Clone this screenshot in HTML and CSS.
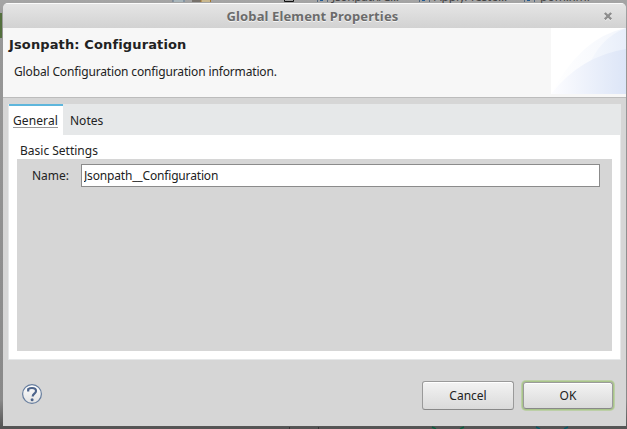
FILE: index.html
```html
<!DOCTYPE html>
<html lang="en">
<head>
<meta charset="utf-8">
<title>Global Element Properties</title>
<link rel="stylesheet" href="styles.css">
</head>
<body>
<div class="desktop">
  <div class="behind">
    <span class="tile"></span>
    <span class="btab bt1">Jsonpath/C...</span>
    <span class="btab bt2">Apply/Teste...</span>
    <span class="btab bt3">pom.xml</span>
    <svg class="marks" width="627" height="429" viewBox="0 0 627 429" aria-hidden="true">
      <path d="M173 0h12v2h-12z" fill="#a9b6bb"/>
      <path d="M173 0v2M184 0v2" stroke="#63758b"/>
      <path d="M192 0h9v2h-9z" fill="#77726c"/>
      <path d="M201 0h10v2h-10z" fill="#c9b88f"/>
      <path d="M201 0v2M210.500 0v2" stroke="#a5772e"/>
      <path d="M284.500 0v1.500h9v-1.500" fill="none" stroke="#111"/>
      <path d="M317.500 0v2M327.500 0v2M419.500 0v2M429.500 0v2M524.500 0v2M534.500 0v2" stroke="#53677f"/>
      <path d="M320 0h3v1h-3zM422 0h3v1h-3zM527 0h3v1h-3z" fill="#215a93"/>
      <path d="M432 427l4 2M464 427l-4 2" stroke="#0c5e3f" stroke-width="1.500"/>
      <path d="M536 427l4 2M568 427l-4 2" stroke="#0b5966" stroke-width="1.500"/>
      <path d="M289.500 427v2M318.500 427v2" stroke="#353535"/>
    </svg>
  </div>
  <main class="dialog">
    <div class="titlebar">
      <span class="title">Global Element Properties</span>
      <svg class="close" width="10" height="10" viewBox="0 0 10 10" aria-label="Close">
        <path d="M2 3l6 6M8 3l-6 6" stroke="#fff" stroke-width="2.400"/>
        <path d="M1.800 2l6.400 6.400M8.200 2l-6.400 6.400" stroke="#8d8d8d" stroke-width="2.400"/>
      </svg>
    </div>
    <header class="header">
      <div class="intro">
        <h1>Jsonpath: Configuration</h1>
        <p>Global Configuration configuration information.</p>
      </div>
      <svg class="banner" width="75" height="66" viewBox="0 0 75 66" aria-hidden="true">
        <defs>
          <linearGradient id="a"><stop offset="0" stop-color="#fff"/><stop offset="1" stop-color="#f3f6fc"/></linearGradient>
          <linearGradient id="b"><stop offset="0" stop-color="#f5f8fd"/><stop offset="1" stop-color="#e8eefa"/></linearGradient>
          <linearGradient id="c"><stop offset="0" stop-color="#fdfdff"/><stop offset="1" stop-color="#dce5f7"/></linearGradient>
        </defs>
        <path fill="#fff" d="M0 0h75v66H0z"/>
        <path fill="url(#a)" d="M0 66Q30 9 75 0v66z"/>
        <path fill="url(#b)" d="M36 66V42Q48 10 75 0v66z"/>
        <path fill="url(#c)" d="M0 66Q30 28 75 21v45z"/>
      </svg>
    </header>
    <section class="folder">
      <nav class="tabs">
        <span class="tab active"><span class="tablabel">General</span></span>
        <span class="tab">Notes</span>
      </nav>
      <div class="page">
        <div class="legend">Basic Settings</div>
        <div class="group">
          <label for="name">Name:</label>
          <input id="name" type="text" value="Jsonpath__Configuration">
        </div>
      </div>
    </section>
    <footer class="footer">
      <svg class="help" width="22" height="22" viewBox="0 0 22 22" aria-label="Help">
        <defs><linearGradient id="h" x2="0" y2="1"><stop stop-color="#fff"/><stop offset="1" stop-color="#e2e2e2"/></linearGradient></defs>
        <circle cx="11" cy="11" r="9.400" fill="url(#h)" stroke="#667d9e" stroke-width="1.200"/>
        <path d="M7.200 8.500V6.200Q8.700 5 11 5c2.500 0 4 1.100 4 3 0 2.700-3.300 2.700-3.300 5.400" fill="none" stroke="#4d648b" stroke-width="2.200"/>
        <circle cx="11.100" cy="16.700" r="1.500" fill="#4d648b"/>
      </svg>
      <div class="buttons">
        <button class="btn">Cancel</button>
        <button class="btn default">OK</button>
      </div>
    </footer>
  </main>
</div>
</body>
</html>
```
FILE: styles.css
```css
* { box-sizing: border-box; }
html, body { margin: 0; height: 100%; overflow: hidden; }
body { font: 12px/16px "Noto Sans", sans-serif; color: #222; }
.desktop {
  position: relative;
  width: 627px;
  height: 429px;
  padding: 3px 1px 3px 3px;
  background: linear-gradient(#a5a5a5 0, #989898 30px, #898989 400px, #555 427px);
}
.behind { position: absolute; inset: 0; overflow: hidden; }
.marks { position: absolute; left: 0; top: 0; }
.tile { position: absolute; left: 0; top: 13px; width: 2px; height: 25px; background: #54703e; }
.btab { position: absolute; top: -11px; font-size: 12px; line-height: 16px; color: #444; white-space: nowrap; }
.bt1 { left: 332px; letter-spacing: -0.35px; }
.bt2 { left: 434px; letter-spacing: -0.15px; }
.bt3 { left: 540px; }
.dialog {
  position: relative;
  display: flex;
  flex-direction: column;
  height: 423px;
  background: #d6d6d6;
  border-radius: 5px 5px 0 0;
  overflow: hidden;
}
.titlebar {
  display: flex;
  align-items: center;
  height: 25px;
  padding: 0 13px 0 19px;
  border-top: 1px solid #fbfbfb;
  background: linear-gradient(#e5e5e5, #d2d2d2);
}
.title {
  flex: 1;
  text-align: center;
  font-size: 13px;
  font-weight: 700;
  letter-spacing: 0.12px;
  color: #6b6b6b;
  text-shadow: 0 1px #f2f2f2;
}
.header {
  display: flex;
  justify-content: space-between;
  height: 70px;
  background: #f7f7f7;
  border-bottom: 1px solid #bcbcbc;
}
.intro { padding: 9px 0 0 6px; }
h1 { margin: 0; font: 700 13px/16px "DejaVu Sans", sans-serif; letter-spacing: 0.13px; }
p { margin: 11px 0 0 5px; letter-spacing: -0.145px; }
.folder {
  display: flex;
  flex-direction: column;
  height: 256px;
  margin: 6px 5px 0;
  border: solid #e6e8e9;
  border-width: 0 1px 1px;
  background: #fff;
}
.tabs { display: flex; height: 31px; background: #e6e8e9; }
.tab { padding: 9px 7px 0; }
.active { width: 54px; padding: 7px 4px 0; border-top: 2px solid #5eb6dc; background: #fff; }
.tablabel { display: block; height: 15px; width: 45px; border-bottom: 1px solid #999; line-height: 16px; letter-spacing: 0.1px; }
.page { flex: 1; display: flex; flex-direction: column; padding: 8px 8px 8px; }
.legend { height: 16px; padding-left: 3px; }
.group { flex: 1; display: flex; align-items: flex-start; padding: 5px 12px 0 15px; background: #d6d6d6; }
label { width: 49px; padding-top: 4px; }
input {
  flex: 1;
  min-width: 0;
  height: 23px;
  padding: 0 2px;
  border: 1px solid #8b8b8b;
  border-radius: 0;
  background: #fff;
  color: #222;
  font: inherit;
  letter-spacing: -0.17px;
}
.footer { flex: 1; display: flex; justify-content: space-between; align-items: flex-start; padding: 20px 12px 0 18px; }
.help { margin-top: 3px; }
.buttons { display: flex; gap: 8px; }
.btn {
  width: 92px;
  height: 29px;
  margin-top: 1px;
  padding: 0;
  border: 1px solid #9a9a9a;
  border-bottom-color: #888;
  border-radius: 3px;
  background: linear-gradient(#f3f3f3, #dadada);
  box-shadow: inset 0 1px #fff;
  color: #222;
  font: inherit;
}
.default { width: 90px; height: 27px; margin: 2px 1px 0; box-shadow: 0 0 0 1px #a9c58a, 0 0 0 2px #bccfa7, inset 0 1px #fff; }
```
